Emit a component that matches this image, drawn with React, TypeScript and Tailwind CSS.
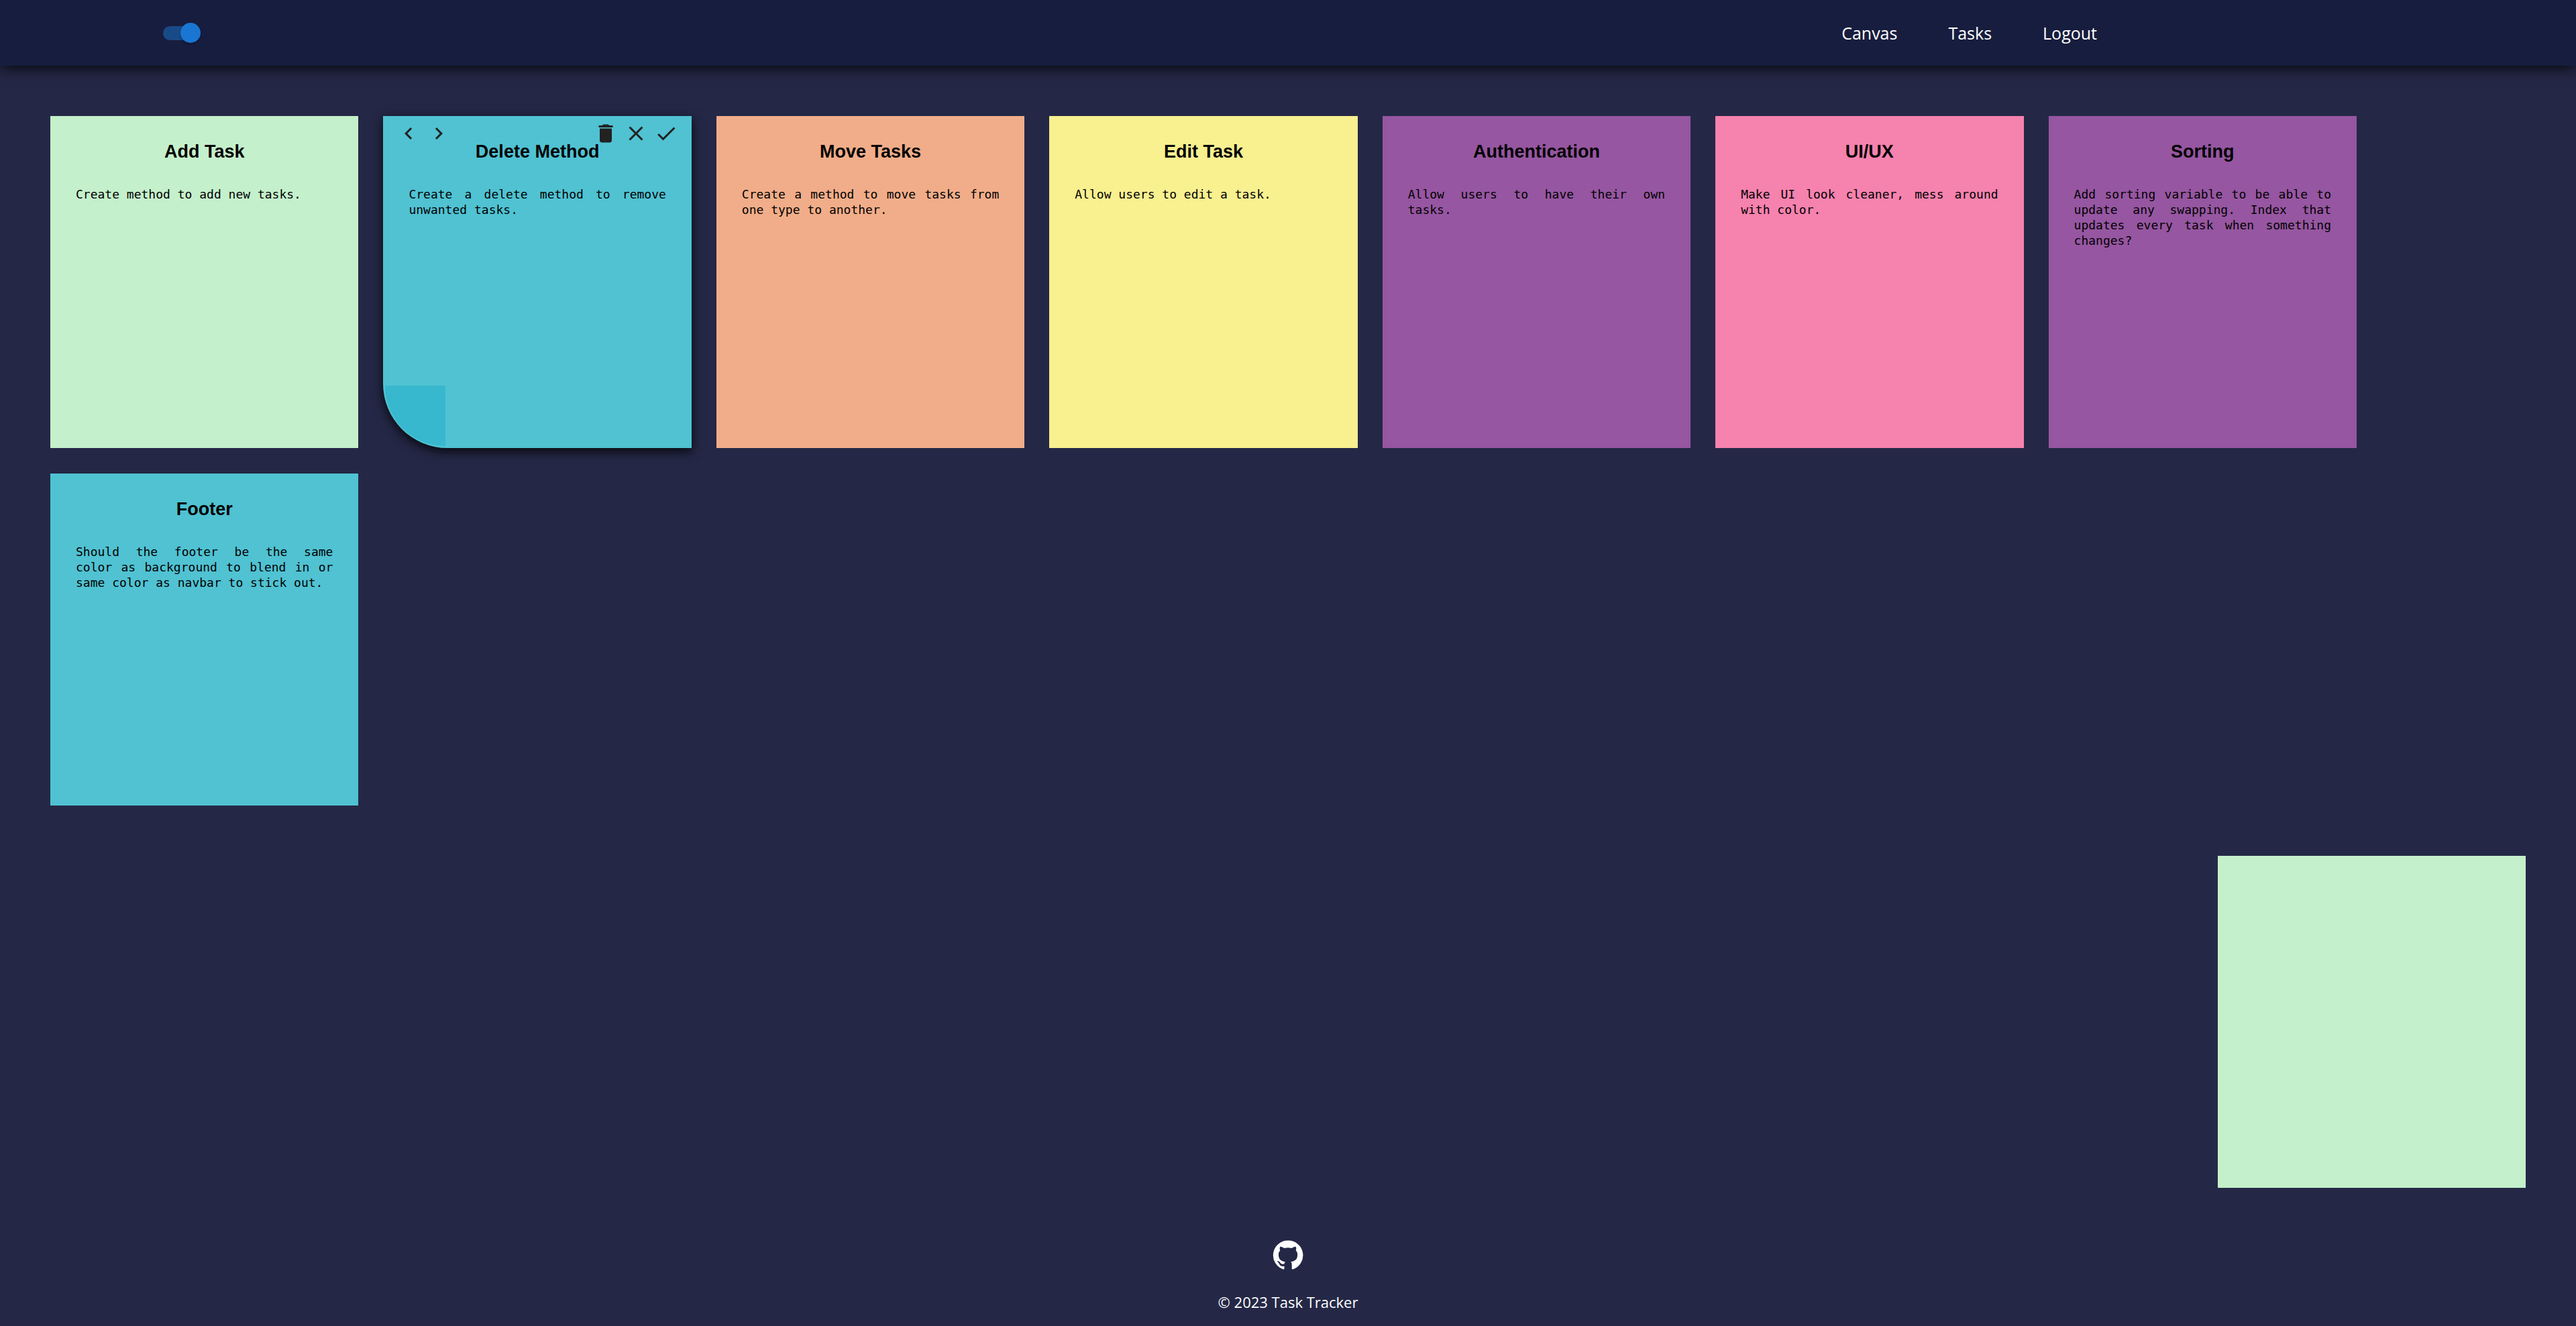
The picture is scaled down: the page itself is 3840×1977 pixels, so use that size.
import { useState } from "react";
import { MdCheck, MdChevronLeft, MdChevronRight, MdClose, MdDelete } from "react-icons/md";

type Task = { title: string; text: string; color: string; active?: boolean };

const tasks: Task[] = [
  { title: "Add Task", text: "Create method to add new tasks.", color: "bg-[#c4f0cb]" },
  { title: "Delete Method", text: "Create a delete method to remove unwanted tasks.", color: "bg-[#50c2d2]", active: true },
  { title: "Move Tasks", text: "Create a method to move tasks from one type to another.", color: "bg-[#f1ad89]" },
  { title: "Edit Task", text: "Allow users to edit a task.", color: "bg-[#f9f090]" },
  { title: "Authentication", text: "Allow users to have their own tasks.", color: "bg-[#9656a1]" },
  { title: "UI/UX", text: "Make UI look cleaner, mess around with color.", color: "bg-[#f682ae]" },
  { title: "Sorting", text: "Add sorting variable to be able to update any swapping. Index that updates every task when something changes?", color: "bg-[#9656a1]" },
  { title: "Footer", text: "Should the footer be the same color\u00a0as background to blend in or same color as navbar to stick out.", color: "bg-[#50c2d2]" },
];

function Toolbar() {
  return (
    <div className="absolute inset-x-0 top-2 flex justify-between px-5 text-4xl text-[#222222]">
      <div className="flex gap-[9px]">
        <button type="button" aria-label="Move left"><MdChevronLeft /></button>
        <button type="button" aria-label="Move right"><MdChevronRight /></button>
      </div>
      <div className="flex gap-[9px]">
        <button type="button" aria-label="Delete"><MdDelete /></button>
        <button type="button" aria-label="Cancel"><MdClose /></button>
        <button type="button" aria-label="Complete"><MdCheck /></button>
      </div>
    </div>
  );
}

function Note({ task }: { task: Task }) {
  const raised = task.active ? "rounded-bl-[96px] shadow-[0_6px_12px_rgba(0,0,0,0.5),0_4px_20px_rgba(0,0,0,0.4)]" : "";
  return (
    <article className={`relative h-[495px] px-[38px] pt-[35px] text-black ${task.color} ${raised}`}>
      {task.active && <Toolbar />}
      <h3 className="text-center font-['Liberation_Sans',sans-serif] text-[27px] leading-9 font-bold">{task.title}</h3>
      <p className="mt-[34px] text-justify font-['DejaVu_Sans_Mono',monospace] text-lg leading-[23px]">{task.text}</p>
      {task.active && <div className="absolute bottom-[3px] left-[3px] size-[90px] rounded-bl-[90px] bg-[#38b8ce]" />}
    </article>
  );
}

function ThemeSwitch() {
  const [on, setOn] = useState(true);
  return (
    <label className="relative flex h-[30px] w-[56px] items-center">
      <input type="checkbox" role="switch" aria-label="Show tasks" checked={on} onChange={() => setOn(!on)} className="peer sr-only" />
      <span className="h-[21px] w-[51px] rounded-full bg-[#194a88]" />
      <span className="absolute left-0 size-[30px] rounded-full bg-[#1976d2] shadow-[0_2px_3px_rgba(0,0,0,0.3)] peer-checked:left-[26px]" />
    </label>
  );
}

function GitHubIcon() {
  return (
    <svg viewBox="0 0 24 24" className="size-12 fill-white" aria-hidden="true">
      <path d="M12 1.27a11 11 0 00-3.48 21.46c.55.09.73-.28.73-.55v-1.84c-3.03.64-3.67-1.46-3.67-1.46-.55-1.29-1.28-1.65-1.28-1.65-.92-.65.1-.65.1-.65 1.1 0 1.73 1.1 1.73 1.1.92 1.65 2.57 1.2 3.21.92a2 2 0 01.64-1.47c-2.47-.27-5.04-1.19-5.04-5.5 0-1.1.46-2.1 1.2-2.84a3.76 3.76 0 010-2.93s.91-.28 3.11 1.1c1.8-.49 3.7-.49 5.5 0 2.1-1.38 3.02-1.1 3.02-1.1a3.76 3.76 0 01.1 2.93c.83.74 1.2 1.74 1.2 2.94 0 4.21-2.57 5.13-5.04 5.4.45.37.82.92.82 2.02v3.03c0 .27.1.64.73.55A11 11 0 0012 1.27" />
    </svg>
  );
}

export default function App() {
  return (
    <div className="flex min-h-screen flex-col bg-[#242846] font-['Open_Sans',sans-serif] text-white">
      <header className="flex h-[98px] items-center justify-between bg-[#171d3e] pr-[714px] pl-[243px] shadow-[0_4px_20px_rgba(0,0,0,0.8)]">
        <ThemeSwitch />
        <nav className="flex gap-[76px] text-[25px] leading-9">
          <a href="#canvas">Canvas</a>
          <a href="#tasks">Tasks</a>
          <a href="#logout">Logout</a>
        </nav>
      </header>
      <main className="pt-[75px] pl-[75px]">
        <section className="mr-[327px] grid grid-cols-[repeat(auto-fill,minmax(459px,1fr))] gap-x-[37px] gap-y-[38px]">
          {tasks.map((task) => (
            <Note key={task.title} task={task} />
          ))}
        </section>
        <div className="mt-[75px] mr-[75px] flex justify-end">
          <button type="button" aria-label="New note" className="h-[495px] w-[459px] bg-[#c4f0cb]" />
        </div>
      </main>
      <footer className="flex flex-col items-center gap-[30px] pt-[76px] text-[22px] leading-8">
        <a href="#github" aria-label="GitHub"><GitHubIcon /></a>
        <p>© 2023 Task Tracker</p>
      </footer>
    </div>
  );
}
